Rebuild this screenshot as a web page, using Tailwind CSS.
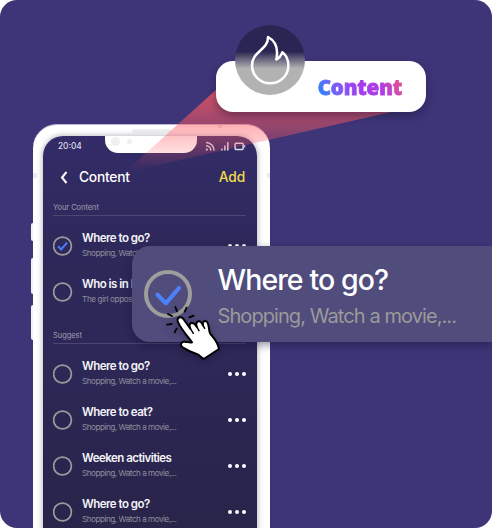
<!DOCTYPE html>
<html lang="en">
<head>
<meta charset="utf-8">
<title>Content</title>
<script src="https://cdn.jsdelivr.net/npm/@tailwindcss/browser@4"></script>
</head>
<body class="bg-white overflow-hidden font-['Inter',sans-serif]">
<main class="relative w-[492px] h-[528px] overflow-hidden rounded-[17px] bg-[#3d3577]">

  <!-- phone -->
  <section class="absolute left-[33px] top-[124px] w-[237px] h-[480px] rounded-[24px] bg-white border-t border-[#bcb8d2] pl-[10px] pr-[13px] pt-[11px]">
    <i class="absolute -left-[2px] top-[98px] w-[2px] h-[18px] bg-[#f2f1f6] rounded-l-sm"></i>
    <i class="absolute -left-[2px] top-[133px] w-[2px] h-[36px] bg-[#f2f1f6] rounded-l-sm"></i>
    <i class="absolute -left-[2px] top-[180px] w-[2px] h-[35px] bg-[#f2f1f6] rounded-l-sm"></i>
    <i class="absolute left-0 top-[48px] w-[4px] h-[5px] bg-[#ececee]"></i>
    <i class="absolute right-0 top-[48px] w-[3px] h-[5px] bg-[#ececee]"></i>
    <i class="absolute left-[99px] top-[4px] w-[39px] h-[4px] rounded-full bg-[#f0f0f0]"></i>
    <i class="absolute left-[185px] top-0 w-[4px] h-[3px] bg-[#e6e0e4]"></i>
    <div class="relative h-full rounded-t-[20px] bg-[linear-gradient(180deg,#332c68_0px,#2d2858_130px,#2d2857_210px,#28244a_390px)] pl-[10px] pr-[11px] shadow-[0_0_5px_1px_rgba(60,60,90,0.35)] flex flex-col">
      <div class="absolute left-[62px] top-0 w-[92px] h-[17px] rounded-b-[13px] bg-white">
        <i class="absolute left-[6px] top-[1px] size-[9px] rounded-full bg-[#f0f0f0]"></i>
        <i class="absolute left-[22px] top-[3px] size-[5px] rounded-full bg-[#f0f0f0]"></i>
      </div>
      <div class="flex items-center justify-between h-[20px] pl-[5px]">
        <span class="text-[8.300px] leading-none font-medium text-[#dddbe8]">20:04</span>
        <svg class="w-[42px] h-[12px]" viewBox="204.500 140 42 12" fill="none" stroke="#dddbe8">
          <path d="M206.500 142.500a8 8 0 0 1 8 8M206.500 145.700a4.800 4.800 0 0 1 4.800 4.800" stroke-width="1.500"/>
          <circle cx="207.300" cy="149.600" r="1.100" fill="#dddbe8" stroke="none"/>
          <path d="M222.400 150.500v-2M225.400 150.500v-5M228.300 150.500v-8.500" stroke-width="1.500"/>
          <rect x="235.600" y="143.200" width="8" height="6.200" rx=".8" stroke-width="1.500"/>
          <path d="M245.200 145v2.600" stroke-width="1"/>
        </svg>
      </div>
      <div class="flex items-center h-[43px] pl-[7px] pr-[1px]">
        <svg class="w-[8px] h-[14px]" viewBox="0 0 8 14" fill="none" stroke="#fff" stroke-width="2"><path d="M6.500 1 2 6.500l4.500 5.500"/></svg>
        <h1 class="ml-[11px] text-[13.800px] leading-none font-medium text-white tracking-[-0.250px]">Content</h1>
        <span class="ml-auto text-[13.800px] leading-none font-medium text-[#eedc4e] tracking-[-0.2px]">Add</span>
      </div>

      <div class="mt-[2px]">
        <h2 class="h-[15px] border-b border-[#4b4772] text-[7.500px] leading-[13px] text-[#a09eae] tracking-[-0.050px]">Your Content</h2>
        <ul class="pt-[6.800px]">
          <li class="flex items-center h-[46.300px]">
            <svg class="size-[20px] shrink-0" viewBox="0 0 20 20" fill="none"><circle cx="9.500" cy="10" r="8.900" stroke="#9d9c9c" stroke-width="1.700"/><path d="m5.100 10.200 3 3.200 6-6.800" stroke="#4c7cf5" stroke-width="2"/></svg>
            <div class="ml-[9px] -mt-px w-[140px] whitespace-nowrap"><p class="text-[11.500px] leading-[14px] font-semibold text-[#f4f3f8] tracking-[-0.520px]">Where to go?</p><p class="mt-[1px] text-[8.200px] leading-[14px] text-[#8f8d9c] tracking-[-0.500px]">Shopping, Watch a movie,...</p></div>
            <div class="ml-[6px] flex gap-[3px]"><i class="size-[4px] rounded-full bg-white"></i><i class="size-[4px] rounded-full bg-white"></i><i class="size-[4px] rounded-full bg-white"></i></div>
          </li>
          <li class="flex items-center h-[46.300px]">
            <svg class="size-[20px] shrink-0" viewBox="0 0 20 20" fill="none"><circle cx="9.500" cy="10" r="8.900" stroke="#9d9c9c" stroke-width="1.700"/></svg>
            <div class="ml-[9px] -mt-[2px] w-[140px] whitespace-nowrap"><p class="text-[11.500px] leading-[14px] font-semibold text-[#f4f3f8] tracking-[-0.520px]">Who is in B</p><p class="mt-[1px] text-[8.200px] leading-[14px] text-[#8f8d9c] tracking-[-0.400px]">The girl oppos</p></div>
          </li>
        </ul>
      </div>

      <div class="mt-[13px]">
        <h2 class="h-[16px] border-b border-[#4b4772] text-[7.500px] leading-[15px] text-[#a09eae] tracking-[-0.050px]">Suggest</h2>
        <ul class="pt-[6px]">
          <li class="flex items-center h-[46.300px]">
            <svg class="size-[20px] shrink-0" viewBox="0 0 20 20" fill="none"><circle cx="9.500" cy="10" r="8.900" stroke="#9d9c9c" stroke-width="1.700"/></svg>
            <div class="ml-[9px] -mt-px w-[140px] whitespace-nowrap"><p class="text-[11.500px] leading-[14px] font-semibold text-[#f4f3f8] tracking-[-0.520px]">Where to go?</p><p class="mt-[1px] text-[8.200px] leading-[14px] text-[#8f8d9c] tracking-[-0.500px]">Shopping, Watch a movie,...</p></div>
            <div class="ml-[6px] flex gap-[3px]"><i class="size-[4px] rounded-full bg-white"></i><i class="size-[4px] rounded-full bg-white"></i><i class="size-[4px] rounded-full bg-white"></i></div>
          </li>
          <li class="flex items-center h-[46.300px]">
            <svg class="size-[20px] shrink-0" viewBox="0 0 20 20" fill="none"><circle cx="9.500" cy="10" r="8.900" stroke="#9d9c9c" stroke-width="1.700"/></svg>
            <div class="ml-[9px] -mt-px w-[140px] whitespace-nowrap"><p class="text-[11.500px] leading-[14px] font-semibold text-[#f4f3f8] tracking-[-0.520px]">Where to eat?</p><p class="mt-[1px] text-[8.200px] leading-[14px] text-[#8f8d9c] tracking-[-0.500px]">Shopping, Watch a movie,...</p></div>
            <div class="ml-[6px] flex gap-[3px]"><i class="size-[4px] rounded-full bg-white"></i><i class="size-[4px] rounded-full bg-white"></i><i class="size-[4px] rounded-full bg-white"></i></div>
          </li>
          <li class="flex items-center h-[46.300px]">
            <svg class="size-[20px] shrink-0" viewBox="0 0 20 20" fill="none"><circle cx="9.500" cy="10" r="8.900" stroke="#9d9c9c" stroke-width="1.700"/></svg>
            <div class="ml-[9px] -mt-[2px] w-[140px] whitespace-nowrap"><p class="text-[11.500px] leading-[14px] font-semibold text-[#f4f3f8] tracking-[-0.520px]">Weeken activities</p><p class="mt-[1px] text-[8.200px] leading-[14px] text-[#8f8d9c] tracking-[-0.500px]">Shopping, Watch a movie,...</p></div>
            <div class="ml-[6px] flex gap-[3px]"><i class="size-[4px] rounded-full bg-white"></i><i class="size-[4px] rounded-full bg-white"></i><i class="size-[4px] rounded-full bg-white"></i></div>
          </li>
          <li class="flex items-center h-[46.300px]">
            <svg class="size-[20px] shrink-0" viewBox="0 0 20 20" fill="none"><circle cx="9.500" cy="10" r="8.900" stroke="#9d9c9c" stroke-width="1.700"/></svg>
            <div class="ml-[9px] -mt-[2px] w-[140px] whitespace-nowrap"><p class="text-[11.500px] leading-[14px] font-semibold text-[#f4f3f8] tracking-[-0.520px]">Where to go?</p><p class="mt-[1px] text-[8.200px] leading-[14px] text-[#8f8d9c] tracking-[-0.500px]">Shopping, Watch a movie,...</p></div>
            <div class="ml-[6px] flex gap-[3px]"><i class="size-[4px] rounded-full bg-white"></i><i class="size-[4px] rounded-full bg-white"></i><i class="size-[4px] rounded-full bg-white"></i></div>
          </li>
        </ul>
      </div>
    </div>
  </section>

  <!-- light beam from the callout to the phone title -->
  <svg class="absolute inset-0 w-[492px] h-[528px]" viewBox="0 0 492 528">
    <defs><linearGradient id="beam" gradientUnits="userSpaceOnUse" x1="0" y1="86" x2="0" y2="172">
      <stop offset="0" stop-color="#ff5a62" stop-opacity=".8"/><stop offset=".4" stop-color="#ff5a62" stop-opacity=".52"/><stop offset="1" stop-color="#ff5a62" stop-opacity="0"/>
    </linearGradient></defs>
    <path d="M218 88 124 173 400 110 300 88Z" fill="url(#beam)"/>
  </svg>

  <!-- title callout -->
  <section class="absolute left-[216px] top-[61px] w-[210px] h-[51px] rounded-[17px] bg-white shadow-[0_4px_8px_rgba(20,15,50,0.4)] flex items-center justify-end pr-[24px]">
    <strong class="font-['Noto_Sans','Open_Sans',sans-serif] font-black text-[20.500px] leading-[26px] tracking-[-0.150px] [-webkit-text-stroke:0.8px_transparent] text-transparent bg-clip-text bg-[linear-gradient(65deg,#2b86fb_4%,#7a5cf8_24%,#a63bee_50%,#b13be4_72%,#ef5580_100%)]">Content</strong>
    <div class="absolute left-[19px] -top-[36px] size-[70px] rounded-full bg-[linear-gradient(180deg,#2a2552_0%,#2a2552_38%,#b2b2b2_62%,#b2b2b2_100%)]">
      <svg class="size-full" viewBox="235 25 70 70" fill="none" stroke="#fff" stroke-width="2.500" stroke-linejoin="round"><path d="M268 37C268.500 50 252 51 252 65.500A18.200 17.800 0 0 0 288.400 65.500C288.400 59 286 55 282.300 52.200C281.300 55.500 279.500 58.200 276.300 59.500C278.500 49 275.500 41 268 37Z"/></svg>
    </div>
  </section>

  <!-- enlarged row -->
  <section class="absolute left-[132px] top-[246px] w-[360px] h-[96px] rounded-l-[18px] bg-[#504c7c] shadow-[0_3px_9px_rgba(20,15,50,0.45)] flex items-center pl-[12px] whitespace-nowrap">
    <svg class="size-[48px] shrink-0" viewBox="0 0 48 48" fill="none"><circle cx="24" cy="24" r="22" stroke="#9e9e9c" stroke-width="4"/><path d="m13.500 24.800 8.300 8.500L35 18" stroke="#4d80fb" stroke-width="4.200" stroke-linecap="round" stroke-linejoin="round"/></svg>
    <div class="ml-[25.500px] pt-[6px]">
      <p class="text-[28.500px] leading-[34px] font-medium text-white tracking-[-0.9px]">Where to go?</p>
      <p class="mt-[4px] text-[20px] leading-[30px] text-[#9b9a99] tracking-[-0.920px]">Shopping, Watch a movie,...</p>
    </div>
  </section>

  <!-- pointer -->
  <svg class="absolute left-[160px] top-[300px] w-[65px] h-[65px] drop-shadow-[0_3px_3px_rgba(20,15,50,0.4)]" viewBox="120 210 195 195" fill="none" stroke="#000" stroke-width="6" stroke-linecap="round" stroke-linejoin="round">
    <path fill="#fff" d="M174 276C170 267 176 261 182 262C188 262 191 267 194 272L211 296C206 284 211 277 217 279C223 279 226 284 230 290C227 279 231 273 237 274C243 274 246 280 249 286C247 277 251 272 257 273C267 275 266 296 269 307C273 319 290 325 297 357L251 387L235 374C220 369 200 360 188 352C178 345 184 334 194 335C203 336 210 339 216 337C210 328 182 296 174 276Z"/>
    <path d="m211 296 9 14M230 290l7 12M249 286l5 9" stroke-width="4.500"/>
    <path d="m166 231 5 13M200 233l-6 12M221 257l-13 5M141 284l14-2M170 296l-6 11M144 252l12 6" stroke-width="5.500"/>
  </svg>
</main>
</body>
</html>
